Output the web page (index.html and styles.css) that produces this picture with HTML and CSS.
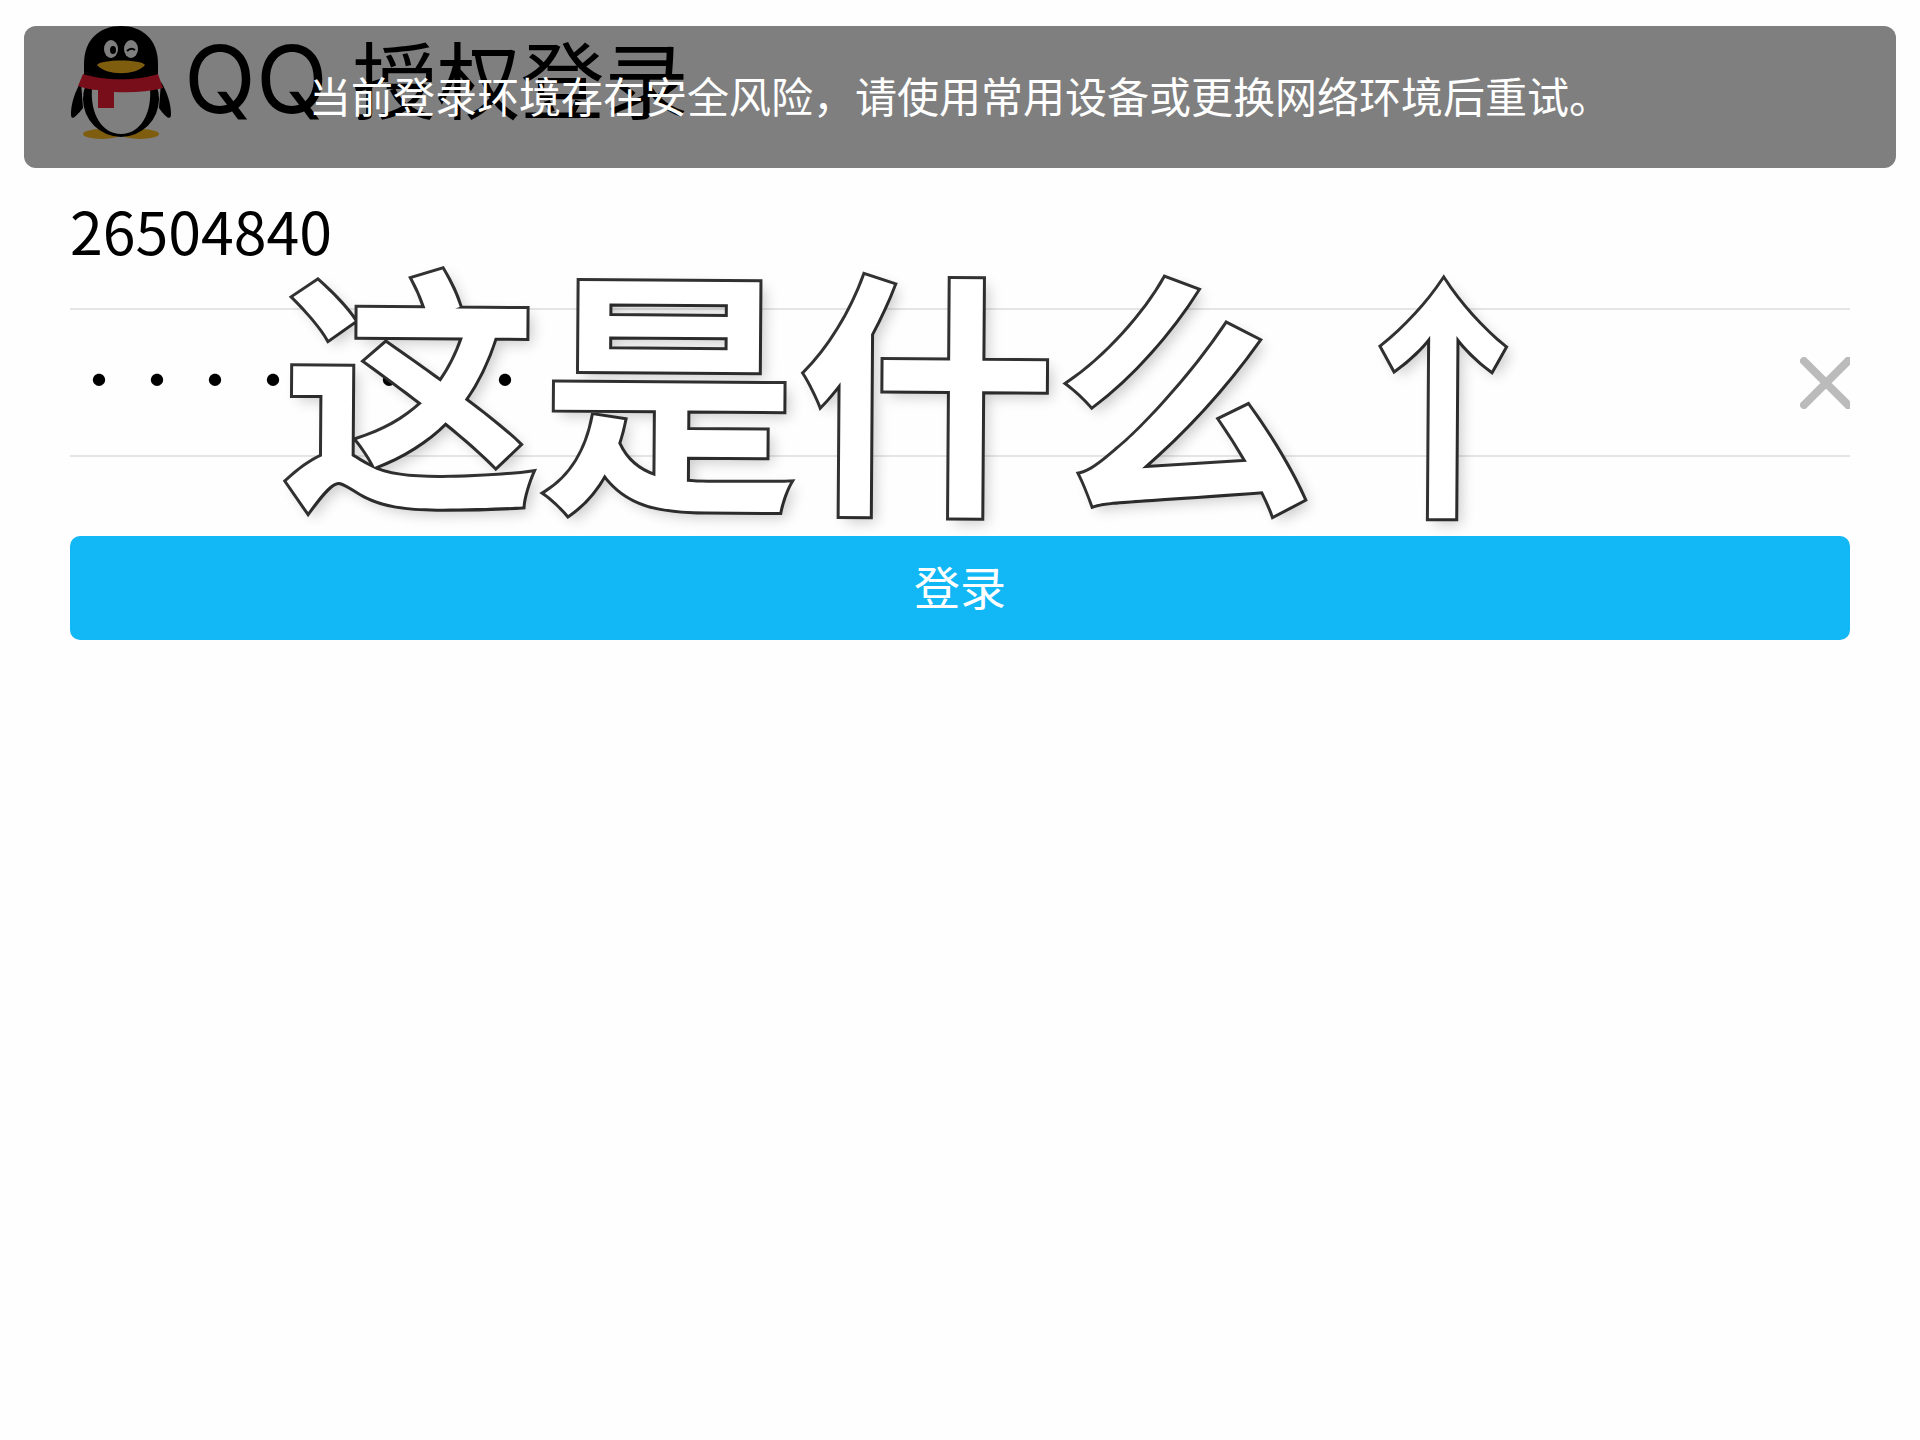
FILE: index.html
```html
<!DOCTYPE html>
<html lang="zh-CN">
<head>
  <meta charset="UTF-8">
  <meta name="viewport" content="width=device-width, initial-scale=1.0">
  <title>QQ 授权登录</title>
  <link rel="stylesheet" href="styles.css">
</head>
<body>
  <main class="page">
    <header class="header">
      <svg class="logo" viewBox="0 0 102 114" aria-hidden="true">
        <ellipse cx="32" cy="108" rx="19" ry="5" fill="#ffba1c"/>
        <ellipse cx="70" cy="108" rx="19" ry="5" fill="#ffba1c"/>
        <path d="M11 56C5 65 1 78 1 88c0 7 4 4 12-6zM91 56c6 9 10 22 10 32 0 7-5 4-12-6z"/>
        <ellipse cx="51" cy="73" rx="38" ry="38"/>
        <path d="M22 62C20 88 32 108 51 108s31-20 29-46z" fill="#fff"/>
        <path d="M14 52V38C14 13 30 0 51 0s37 13 37 38v14c-20 9-54 9-74 0z"/>
        <ellipse cx="41" cy="23" rx="7" ry="9" fill="#fff"/>
        <ellipse cx="61" cy="23" rx="7" ry="9" fill="#fff"/>
        <ellipse cx="43" cy="24" rx="3" ry="4"/>
        <path d="M57 25q4-4 8-1" fill="none" stroke="#000" stroke-width="2"/>
        <path d="M27 39c3-6 45-6 48 0-9 11-39 11-48 0z" fill="#ffba1c"/>
        <path d="M13 48c22 7 54 7 75 0l5 14c-15 4-32 5-49 4v16H28V64c-7 0-14-2-20-4z" fill="#f01d33"/>
      </svg>
      <h1 class="title"><span class="brand">QQ</span> 授权登录</h1>
    </header>

    <form class="login" onsubmit="return false">
      <div class="field">
        <input class="input" type="text" value="26504840" aria-label="QQ号码">
      </div>
      <div class="field">
        <input class="input password" id="password" type="password" value="12345678" aria-label="密码">
        <button class="clear" type="button" aria-label="清除" onclick="document.getElementById('password').value = ''">
          <svg class="clear-icon" viewBox="0 0 50 52">
            <path d="M4 4l46 46M4 48L50 2" fill="none" stroke="#bbb" stroke-width="8" stroke-linecap="round"/>
          </svg>
        </button>
      </div>
      <button class="submit" type="submit">登录</button>
    </form>
  </main>

  <div class="toast" role="alert">当前登录环境存在安全风险，请使用常用设备或更换网络环境后重试。</div>
  <div class="caption">这是什么↑</div>
</body>
</html>
```

FILE: styles.css
```css
* {
  box-sizing: border-box;
}

body {
  margin: 0;
  background: #fefefe;
  color: #000;
  font-family: "Noto Sans CJK SC", sans-serif;
}

.page {
  padding: 26px 70px;
}

.header {
  display: flex;
  align-items: flex-start;
  height: 114px;
}

.logo {
  width: 102px;
  height: 114px;
}

.title {
  margin: 0 0 0 12px;
  font-size: 84px;
  font-weight: 400;
  line-height: 102px;
  white-space: nowrap;
}

.brand {
  margin-right: 6px;
  font-family: Inter, sans-serif;
  font-size: 94px;
  line-height: 1;
}

.login {
  display: flex;
  flex-direction: column;
  margin-top: 23px;
}

.field {
  display: flex;
  align-items: center;
  height: 147px;
  border-bottom: 2px solid #e5e5e5;
}

.input {
  flex: 1;
  min-width: 0;
  padding: 0 0 12px;
  border: none;
  outline: none;
  background: transparent;
  color: #000;
  font-family: "Noto Sans CJK SC", sans-serif;
  font-size: 59px;
  font-weight: 400;
  line-height: 88px;
}

.password {
  font-size: 58px;
}

.clear {
  padding: 0;
  border: none;
  background: none;
  cursor: pointer;
}

.clear-icon {
  display: block;
  width: 50px;
  height: 52px;
}

.submit {
  height: 104px;
  margin-top: 79px;
  padding: 0 0 6px;
  border: none;
  border-radius: 10px;
  background: #12b7f5;
  color: #fff;
  font-family: inherit;
  font-size: 46px;
  cursor: pointer;
}

.toast {
  position: absolute;
  top: 26px;
  left: 24px;
  right: 24px;
  padding: 38px 40px 42px;
  border-radius: 12px;
  background: rgba(0, 0, 0, 0.5);
  color: #fff;
  font-size: 42px;
  line-height: 62px;
  text-align: center;
}

.caption {
  position: absolute;
  top: 232px;
  left: 282px;
  color: #fff;
  font-size: 258px;
  font-weight: 700;
  line-height: 300px;
  white-space: nowrap;
  transform: rotate(0.4deg);
  -webkit-text-stroke: 6px #333;
  paint-order: stroke fill;
  text-shadow: 6px 6px 14px rgba(0, 0, 0, 0.2);
  pointer-events: none;
}
```
